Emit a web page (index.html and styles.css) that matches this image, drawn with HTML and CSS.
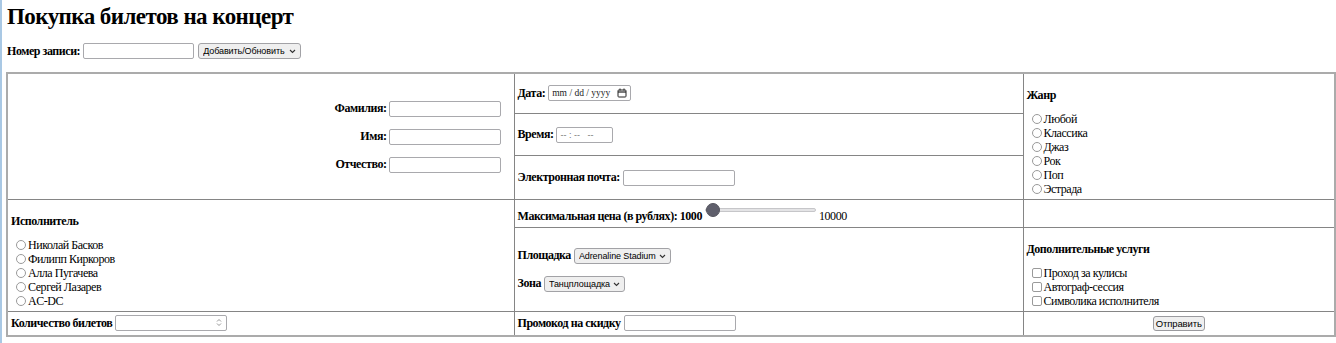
FILE: index.html
```html
<!DOCTYPE html>
<html lang="ru">
<head>
<meta charset="utf-8">
<title>Покупка билетов на концерт</title>
<link rel="stylesheet" href="styles.css">
</head>
<body>
<h1 class="title">Покупка билетов на концерт</h1>
<form class="order">
  <div class="record line">
    <label class="lbl" for="rec">Номер записи:</label>
    <input type="text" id="rec" class="field w-text">
    <span class="select w-action">
      <select class="sel"><option>Добавить/Обновить</option></select>
      <svg class="chev" width="7" height="5" viewBox="0 0 7 5"><polyline points="1,1 3.5,3.5 6,1" fill="none" stroke="#333" stroke-width="1.1"/></svg>
    </span>
  </div>
  <table class="grid">
    <colgroup><col class="c1"><col class="c2"><col class="c3"></colgroup>
    <tr class="h40">
      <td rowspan="3" class="cell fio">
        <p class="fio-row"><label class="lbl" for="ln">Фамилия:</label><input type="text" id="ln" class="field w-text"></p>
        <p class="fio-row"><label class="lbl" for="fn">Имя:</label><input type="text" id="fn" class="field w-text"></p>
        <p class="fio-row"><label class="lbl" for="mn">Отчество:</label><input type="text" id="mn" class="field w-text"></p>
      </td>
      <td class="cell">
        <div class="line">
          <label class="lbl" for="dt">Дата:</label>
          <span class="datebox">
            <input type="text" id="dt" class="field date" placeholder="mm / dd / yyyy">
            <svg class="cal" width="10" height="10" viewBox="0 0 10 10"><rect x="1" y="2" width="8" height="7" rx="0.8" fill="none" stroke="#222" stroke-width="1"/><line x1="1" y1="4" x2="9" y2="4" stroke="#222" stroke-width="1.2"/><line x1="3" y1="0.5" x2="3" y2="2.5" stroke="#222" stroke-width="1"/><line x1="7" y1="0.5" x2="7" y2="2.5" stroke="#222" stroke-width="1"/></svg>
          </span>
        </div>
      </td>
      <td rowspan="3" class="cell group">
        <p class="group-title">Жанр</p>
        <label class="opt"><input type="radio" name="genre" class="radio">Любой</label>
        <label class="opt"><input type="radio" name="genre" class="radio">Классика</label>
        <label class="opt"><input type="radio" name="genre" class="radio">Джаз</label>
        <label class="opt"><input type="radio" name="genre" class="radio">Рок</label>
        <label class="opt"><input type="radio" name="genre" class="radio">Поп</label>
        <label class="opt"><input type="radio" name="genre" class="radio">Эстрада</label>
      </td>
    </tr>
    <tr class="h42">
      <td class="cell">
        <div class="line">
          <label class="lbl" for="tm">Время:</label>
          <input type="text" id="tm" class="field time" placeholder="-- : --   --">
        </div>
      </td>
    </tr>
    <tr class="h43">
      <td class="cell">
        <div class="line">
          <label class="lbl" for="em">Электронная почта:</label>
          <input type="email" id="em" class="field w-text">
        </div>
      </td>
    </tr>
    <tr class="h28">
      <td rowspan="2" class="cell group">
        <p class="group-title">Исполнитель</p>
        <label class="opt"><input type="radio" name="artist" class="radio">Николай Басков</label>
        <label class="opt"><input type="radio" name="artist" class="radio">Филипп Киркоров</label>
        <label class="opt"><input type="radio" name="artist" class="radio">Алла Пугачева</label>
        <label class="opt"><input type="radio" name="artist" class="radio">Сергей Лазарев</label>
        <label class="opt"><input type="radio" name="artist" class="radio">AC-DC</label>
      </td>
      <td class="cell">
        <div class="line price">
          <label class="lbl low" for="pr">Максимальная цена (в рублях): 1000</label>
          <input type="range" id="pr" class="range" min="1000" max="10000" value="1000">
          <span class="txt low">10000</span>
        </div>
      </td>
      <td class="cell"></td>
    </tr>
    <tr class="h84">
      <td class="cell">
        <div class="line pair">
          <label class="lbl" for="pl">Площадка</label>
          <span class="select w-venue">
            <select id="pl" class="sel"><option>Adrenaline Stadium</option></select>
            <svg class="chev" width="7" height="5" viewBox="0 0 7 5"><polyline points="1,1 3.5,3.5 6,1" fill="none" stroke="#333" stroke-width="1.1"/></svg>
          </span>
        </div>
        <div class="line pair">
          <label class="lbl" for="zn">Зона</label>
          <span class="select w-zone">
            <select id="zn" class="sel"><option>Танцплощадка</option></select>
            <svg class="chev" width="7" height="5" viewBox="0 0 7 5"><polyline points="1,1 3.5,3.5 6,1" fill="none" stroke="#333" stroke-width="1.1"/></svg>
          </span>
        </div>
      </td>
      <td class="cell group">
        <p class="group-title">Дополнительные услуги</p>
        <label class="opt"><input type="checkbox" class="check">Проход за кулисы</label>
        <label class="opt"><input type="checkbox" class="check">Автограф-сессия</label>
        <label class="opt"><input type="checkbox" class="check">Символика исполнителя</label>
      </td>
    </tr>
    <tr class="h24">
      <td class="cell">
        <div class="line">
          <label class="lbl" for="qt">Количество билетов</label>
          <span class="numbox">
            <input type="number" id="qt" class="field w-text num">
            <svg class="spin" width="6" height="9" viewBox="0 0 6 9"><polyline points="1,3.5 3,1.5 5,3.5" fill="none" stroke="#8a8a8a" stroke-width="0.9"/><polyline points="1,5.5 3,7.5 5,5.5" fill="none" stroke="#8a8a8a" stroke-width="0.9"/></svg>
          </span>
        </div>
      </td>
      <td class="cell">
        <div class="line">
          <label class="lbl" for="pc">Промокод на скидку</label>
          <input type="text" id="pc" class="field w-text">
        </div>
      </td>
      <td class="cell center">
        <button type="submit" class="btn">Отправить</button>
      </td>
    </tr>
  </table>
</form>
</body>
</html>
```

FILE: styles.css
```css
* {
  box-sizing: border-box;
}

body {
  margin: 0;
  padding: 0 2px 0 4px;
  min-height: 343px;
  border-left: 2px solid #a9c8e4;
  background: #fff;
  color: #000;
  font-family: "Liberation Serif", "Times New Roman", serif;
  font-size: 12px;
  letter-spacing: -0.45px;
}

.title {
  margin: 3px 0 0;
  padding-left: 1px;
  font-size: 23px;
  line-height: 27px;
  letter-spacing: -0.55px;
  font-weight: bold;
}

.line {
  display: flex;
  align-items: center;
  gap: 3px;
  height: 16px;
  white-space: nowrap;
}

.record {
  margin-top: 13px;
  padding-left: 1px;
}

.record .w-text {
  width: 111px;
}

.lbl {
  font-weight: bold;
}

.field {
  height: 16px;
  margin: 0;
  padding: 0 3px;
  border: 1px solid #a9a9ad;
  border-radius: 2px;
  background: #fff;
  font-family: "Liberation Sans", Arial, sans-serif;
  font-size: 9px;
  letter-spacing: 0;
  color: #000;
  outline: none;
}

.w-text {
  width: 112px;
}

.select {
  position: relative;
  display: inline-flex;
  height: 16px;
}

.sel {
  -webkit-appearance: none;
  appearance: none;
  width: 100%;
  height: 16px;
  margin: 0;
  padding: 0 12px 0 4px;
  border: 1px solid #a2a2a6;
  border-radius: 3px;
  background: #efefef;
  font-family: "Liberation Sans", Arial, sans-serif;
  font-size: 9px;
  letter-spacing: -0.1px;
  color: #000;
}

.chev {
  position: absolute;
  right: 5px;
  top: 6px;
  pointer-events: none;
}

.w-action {
  width: 103px;
  margin-left: 1px;
}

.w-venue {
  width: 97px;
}

.w-zone {
  width: 81px;
}

.grid {
  width: 1328px;
  margin-top: 13px;
  table-layout: fixed;
  border-collapse: collapse;
  border: 2px solid #ababab;
}

.c1 { width: 507px; }
.c2 { width: 509px; }
.c3 { width: 312px; }

.h40 { height: 40px; }
.h42 { height: 42px; }
.h43 { height: 43px; }
.h28 { height: 28px; }
.h84 { height: 84px; }
.h24 { height: 24px; }

.cell {
  padding: 3px;
  border: 1px solid #858585;
  vertical-align: middle;
  text-align: left;
}

.fio {
  padding-right: 13px;
}

.fio-row {
  display: flex;
  justify-content: flex-end;
  align-items: center;
  gap: 2px;
  height: 16px;
  margin: 12px 0;
  white-space: nowrap;
}

.datebox,
.numbox {
  position: relative;
  display: inline-flex;
}

.date {
  width: 83px;
  padding-right: 16px;
  font-family: "Liberation Serif", "Times New Roman", serif;
  font-size: 9.5px;
}

.date::placeholder {
  color: #222;
}

.cal {
  position: absolute;
  right: 4px;
  top: 3px;
  pointer-events: none;
}

.time {
  width: 57px;
  font-size: 9px;
}

.time::placeholder {
  color: #777;
}

.num {
  -moz-appearance: textfield;
  appearance: textfield;
  padding-right: 16px;
}

.num::-webkit-inner-spin-button,
.num::-webkit-outer-spin-button {
  -webkit-appearance: none;
  margin: 0;
}

.spin {
  position: absolute;
  right: 5px;
  top: 3px;
  pointer-events: none;
}

.group {
  vertical-align: top;
}

.group-title {
  margin: 11px 0 10px;
  line-height: 14px;
  font-weight: bold;
}

.opt {
  display: flex;
  align-items: center;
  height: 14px;
  white-space: nowrap;
}

.radio,
.check {
  -webkit-appearance: none;
  appearance: none;
  flex: none;
  width: 10px;
  height: 10px;
  margin: 0 2px 0 5px;
  border: 1px solid #9a9a9a;
  background: #fff;
}

.radio {
  border-radius: 50%;
}

.check {
  border-radius: 2px;
}

.price {
  gap: 3px;
}

.low {
  padding-top: 5px;
}

.range {
  -webkit-appearance: none;
  appearance: none;
  width: 111px;
  height: 14px;
  margin: 0 0 7px;
  background: transparent;
}

.range::-webkit-slider-runnable-track {
  height: 4px;
  border: 1px solid #c6c6c9;
  border-radius: 3px;
  background: #e4e4e6;
}

.range::-webkit-slider-thumb {
  -webkit-appearance: none;
  appearance: none;
  width: 14px;
  height: 14px;
  margin-top: -6px;
  border-radius: 50%;
  background: #5f5f6c;
  border: 1px solid #55555f;
}

.pair + .pair {
  margin-top: 12px;
}

.center {
  text-align: center;
}

.btn {
  width: 52px;
  height: 15px;
  margin: 0;
  padding: 0;
  border: 1px solid #9a9a9e;
  border-radius: 3px;
  background: #efefef;
  font-family: "Liberation Sans", Arial, sans-serif;
  font-size: 9.5px;
  letter-spacing: -0.1px;
  color: #000;
}
```
